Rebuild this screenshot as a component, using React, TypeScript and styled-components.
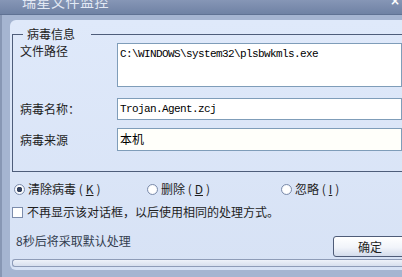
import React from 'react';
import styled, { createGlobalStyle } from 'styled-components';

// == styles =======================================================================================
const GlobalStyle = createGlobalStyle`
  html, body {
    margin: 0;
    padding: 0;
    overflow: hidden;
    background: #9dadc9;
  }
`;

const Window = styled.div`
  width: 402px;
  height: 277px;
  overflow: hidden;
  display: flex;
  flex-direction: column;
  background: linear-gradient( to right, #8797b4 0, #8797b4 2px, #a5b5d1 2px, #a5b5d1 100% );
  font-family: "Noto Sans CJK SC", "Liberation Sans", sans-serif;
  font-size: 12px;
  color: #1e1e1e;
`;

const TitleBar = styled.div`
  flex: none;
  height: 14px;
  display: flex;
  justify-content: space-between;
  align-items: flex-start;
  overflow: hidden;
  padding: 0 2px 0 22px;
  background: linear-gradient( to bottom, #8696b6, #6f82a4 );
  border-bottom: 1px solid #5f7293;
`;

const TitleText = styled.span`
  margin-top: -7px;
  font-size: 14px;
  line-height: 16px;
  color: #e3e9f4;
  letter-spacing: 0.5px;
`;

const CloseMark = styled.span`
  margin-top: -5px;
  font-family: "DejaVu Sans", sans-serif;
  font-size: 12px;
  font-weight: bold;
  line-height: 12px;
  color: #ffffff;
`;

const Client = styled.div`
  flex: none;
  width: 430px;
  height: 250px;
  margin: 5px 0 0 10px;
  box-sizing: border-box;
  border-radius: 6px 0 0 6px;
  background: linear-gradient( to bottom, #dfe9fa, #d7e2f5 );
  display: flex;
  flex-direction: column;
`;

const Group = styled.fieldset`
  margin: 7px 0 0 2px;
  padding: 2px 0 17px 7px;
  border: 1px solid #4e5d7a;
  border-right: none;
  min-width: 0;
  display: grid;
  grid-template-columns: 97px 285px;
  grid-template-rows: 44px 22px 23px;
  row-gap: 11px;
  align-items: center;

  & > :nth-child( 6 ), & > :nth-child( 7 ) {
    margin-top: -6px;
  }
`;

const Legend = styled.legend`
  margin-left: 3px;
  padding: 0 16px 0 4px;
  line-height: 14px;
  color: #1e1e1e;
`;

const Label = styled.span<{ $top?: boolean }>`
  align-self: ${ ( p ) => ( p.$top ? 'start' : 'center' ) };
  padding-top: ${ ( p ) => ( p.$top ? '1px' : '0' ) };
  line-height: 14px;
`;

const Field = styled.div<{ $mono?: boolean }>`
  box-sizing: border-box;
  height: 100%;
  border: 1px solid #7f9db9;
  background: ${ ( p ) => ( p.$mono ? '#ffffff' : '#fffffa' ) };
  padding: 3px 2px;
  font-family: ${ ( p ) => ( p.$mono
    ? '"Liberation Mono", "Noto Sans CJK SC", monospace'
    : '"Noto Sans CJK SC", sans-serif' ) };
  font-size: ${ ( p ) => ( p.$mono ? '11px' : '12px' ) };
  letter-spacing: ${ ( p ) => ( p.$mono ? '-0.6px' : '0' ) };
  line-height: 14px;
  color: #000000;
  white-space: nowrap;
`;

const RadioRow = styled.div`
  margin: 10px 0 0 4px;
  display: grid;
  grid-template-columns: 133px 134px 120px;
  line-height: 14px;
`;

const Option = styled.label`
  display: flex;
  align-items: center;
  gap: 3px;
`;

const RadioDot = styled.span<{ $checked?: boolean }>`
  box-sizing: border-box;
  width: 11px;
  height: 11px;
  border-radius: 50%;
  border: 1px solid #7c8cab;
  background: radial-gradient( circle at 50% 50%,
    ${ ( p ) => ( p.$checked ? '#34425f 0, #34425f 2.5px,' : '' ) } #ffffff 3px, #e6ebf4 100% );
`;

const CheckRow = styled.label`
  margin: 9px 0 0 2px;
  display: flex;
  align-items: center;
  gap: 4px;
  line-height: 14px;
`;

const CheckBox = styled.span`
  box-sizing: border-box;
  width: 11px;
  height: 11px;
  border: 1px solid #7c8cab;
  background: #ffffff;
`;

const Footer = styled.div`
  margin: 17px 0 0 6px;
  display: flex;
  align-items: flex-start;
  justify-content: space-between;
  width: 392px;
`;

const Notice = styled.span`
  line-height: 14px;
  margin-top: -2px;
  color: #333d4f;
`;

const Button = styled.button`
  box-sizing: border-box;
  width: 75px;
  height: 21px;
  padding: 0;
  border: 1px solid #4f5c78;
  border-radius: 3px;
  background: linear-gradient( to bottom, #ffffff 0, #f1f4fa 55%, #d3dcec 100% );
  font-family: "Noto Sans CJK SC", sans-serif;
  font-size: 12px;
  color: #1e1e1e;
  text-align: left;
  text-indent: 24px;
`;

const Progress = styled.div`
  margin: 2px 0 0 2px;
  height: 8px;
  box-sizing: border-box;
  border: 1px solid #8e9cb8;
  border-right: none;
  border-radius: 3px 0 0 3px;
  background: linear-gradient( to bottom, #eef2f9, #d7dfee );
`;

// == component ====================================================================================
const App = (): JSX.Element => {
  return <>
    <GlobalStyle />
    <Window>
      <TitleBar>
        <TitleText>瑞星文件监控</TitleText>
        <CloseMark>×</CloseMark>
      </TitleBar>
      <Client>
        <Group>
          <Legend>病毒信息</Legend>
          <Label $top>文件路径</Label>
          <Field $mono>C:\WINDOWS\system32\plsbwkmls.exe</Field>
          <Label>病毒名称：</Label>
          <Field $mono>Trojan.Agent.zcj</Field>
          <Label>病毒来源</Label>
          <Field>本机</Field>
        </Group>
        <RadioRow>
          <Option><RadioDot $checked />清除病毒 (<u>K</u>)</Option>
          <Option><RadioDot />删除 (<u>D</u>)</Option>
          <Option><RadioDot />忽略 (<u>I</u>)</Option>
        </RadioRow>
        <CheckRow><CheckBox />不再显示该对话框，以后使用相同的处理方式。</CheckRow>
        <Footer>
          <Notice>8秒后将采取默认处理</Notice>
          <Button>确定</Button>
        </Footer>
        <Progress />
      </Client>
    </Window>
  </>;
};

export default App;
